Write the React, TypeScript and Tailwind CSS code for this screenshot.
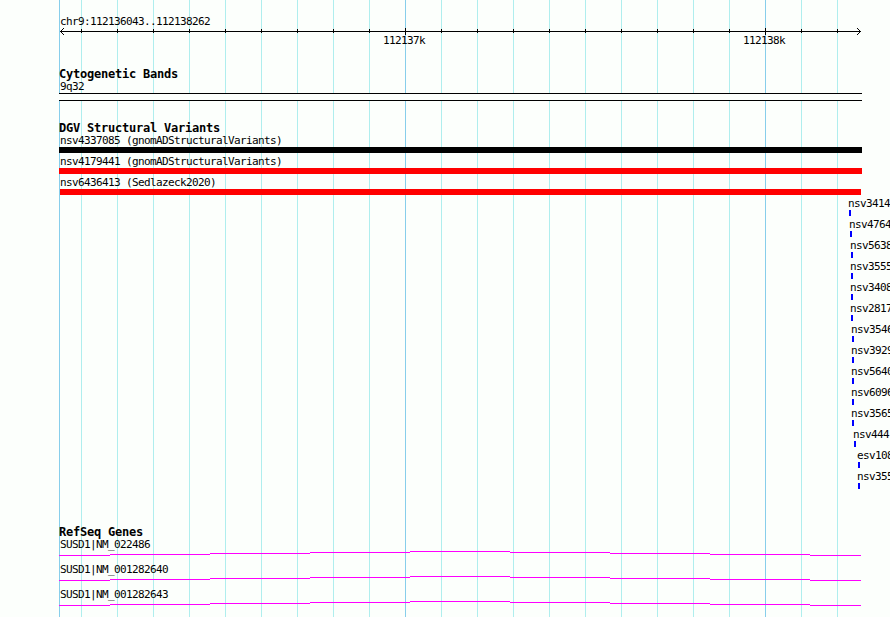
type Variant = { name: string; x: number };

const smallText =
  "h-[13px] whitespace-pre text-[11px] leading-[13px] tracking-[-0.622px]";

const minorLines = Array.from({ length: 22 }, (_, i) => 81 + i * 36);
const isMajor = (x: number) => x === 405 || x === 765;

const wideVariants = [
  { name: "nsv4337085 (gnomADStructuralVariants)", bar: "ml-[59px] w-[803px] bg-black" },
  { name: "nsv4179441 (gnomADStructuralVariants)", bar: "ml-[59px] w-[803px] bg-[#ff0000]" },
  { name: "nsv6436413 (Sedlazeck2020)", bar: "ml-[60px] w-[801px] bg-[#ff0000]" },
];

const edgeVariants: Variant[] = [
  { name: "nsv3414", x: 849 },
  { name: "nsv4764", x: 850 },
  { name: "nsv5638", x: 851 },
  { name: "nsv3555", x: 851 },
  { name: "nsv3408", x: 851 },
  { name: "nsv2817", x: 851 },
  { name: "nsv3546", x: 852 },
  { name: "nsv3929", x: 852 },
  { name: "nsv5640", x: 852 },
  { name: "nsv6096", x: 852 },
  { name: "nsv3565", x: 852 },
  { name: "nsv444", x: 854 },
  { name: "esv108", x: 858 },
  { name: "nsv355", x: 858 },
];

const genes = ["SUSD1|NM_022486", "SUSD1|NM_001282640", "SUSD1|NM_001282643"];

function GridLines() {
  return (
    <svg className="absolute inset-0" width="890" height="617" shapeRendering="crispEdges">
      <rect x="59" y="0" width="1" height="617" fill="#87ceeb" />
      {minorLines.map((x) => (
        <rect key={x} x={x} y="0" width="1" height="617" fill={isMajor(x) ? "#87ceeb" : "#afeeee"} />
      ))}
    </svg>
  );
}

function Ruler() {
  return (
    <svg className="block" width="890" height="7" shapeRendering="crispEdges">
      <rect x="60" y="3" width="801" height="1" />
      {[1, 2, 3].map((d) => (
        <g key={d}>
          <rect x={60 + d} y={3 - d} width="1" height="1" />
          <rect x={60 + d} y={3 + d} width="1" height="1" />
          <rect x={860 - d} y={3 - d} width="1" height="1" />
          <rect x={860 - d} y={3 + d} width="1" height="1" />
        </g>
      ))}
      {minorLines.map((x) =>
        isMajor(x) ? (
          <rect key={x} x={x} y="0" width="1" height="7" />
        ) : (
          <rect key={x} x={x} y="1" width="1" height="4" />
        ),
      )}
    </svg>
  );
}

function Heading({ children }: { children: string }) {
  return (
    <h2 className="ml-[59px] h-[14px] whitespace-pre text-[12px] font-bold leading-[14px] tracking-[-0.224px]">
      {children}
    </h2>
  );
}

function Intron() {
  return (
    <svg className="block" width="890" height="5" shapeRendering="crispEdges" fill="#ff00ff">
      <rect x="59" y="4" width="51" height="1" />
      <rect x="110" y="3" width="100" height="1" />
      <rect x="210" y="2" width="100" height="1" />
      <rect x="310" y="1" width="100" height="1" />
      <rect x="410" y="0" width="100" height="1" />
      <rect x="510" y="1" width="100" height="1" />
      <rect x="610" y="2" width="100" height="1" />
      <rect x="710" y="3" width="100" height="1" />
      <rect x="810" y="4" width="51" height="1" />
    </svg>
  );
}

export default function App() {
  return (
    <main className="relative h-[617px] w-[890px] overflow-hidden bg-[#fcfffc] font-['DejaVu_Sans_Mono',monospace] text-black">
      <GridLines />
      <div className="relative flex flex-col">
        <header className="flex flex-col pt-[15px]">
          <div className={`ml-[60px] ${smallText}`}>chr9:112136043..112138262</div>
          <Ruler />
          <div className={`-mt-px flex gap-[318px] pl-[383px] ${smallText}`}>
            <span className="w-[42px]">112137k</span>
            <span className="w-[42px]">112138k</span>
          </div>
        </header>

        <section className="mt-5 flex flex-col">
          <Heading>Cytogenetic Bands</Heading>
          <div className={`-mt-px ml-[60px] ${smallText}`}>9q32</div>
          <div className="ml-[59px] h-2 w-[803px] border-y border-black bg-[#fcfffc]" />
        </section>

        <section className="mt-5 flex flex-col">
          <Heading>DGV Structural Variants</Heading>
          <div className="-mt-px flex flex-col gap-0.5">
            {wideVariants.map((v) => (
              <div key={v.name} className="flex flex-col">
                <div className={`ml-[60px] ${smallText}`}>{v.name}</div>
                <div className={`h-1.5 ${v.bar}`} />
              </div>
            ))}
            {edgeVariants.map((v) => (
              <div key={v.name} className="flex flex-col" style={{ paddingLeft: v.x - 1 }}>
                <div className={smallText}>{v.name}</div>
                <div className="ml-px h-1.5 w-0.5 bg-[#0000ff]" />
              </div>
            ))}
          </div>
        </section>

        <section className="mt-9 flex flex-col">
          <Heading>RefSeq Genes</Heading>
          <div className="-mt-px flex flex-col gap-[7px]">
            {genes.map((name) => (
              <div key={name} className="flex flex-col">
                <div className={`ml-[60px] ${smallText}`}>{name}</div>
                <Intron />
              </div>
            ))}
          </div>
        </section>
      </div>
    </main>
  );
}
